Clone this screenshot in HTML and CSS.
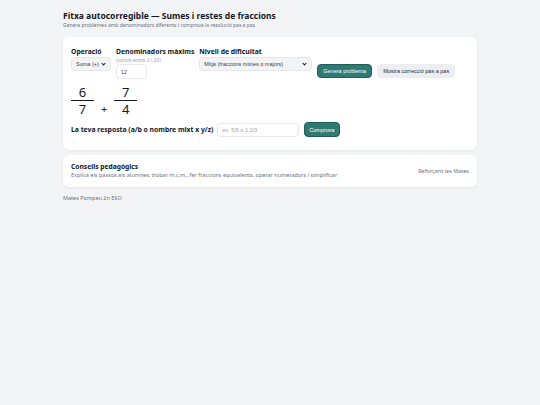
FILE: index.html
```html
<!DOCTYPE html>
<html lang="ca">
<head>
  <meta charset="UTF-8" />
  <title>Fitxa autocorregible</title>
  <link rel="stylesheet" href="styles.css">
</head>
<body>
  <div class="wrap">
    <header class="head">
      <h1>Fitxa autocorregible — Sumes i restes de fraccions</h1>
      <p class="sub">Genera problemes amb denominadors diferents i comprova la resolució pas a pas</p>
    </header>

    <section class="card main">
      <div class="controls">
        <div class="field">
          <label for="op">Operació</label>
          <span class="sel">
            <select id="op">
              <option>Suma (+)</option>
              <option>Resta (−)</option>
            </select>
          </span>
        </div>
        <div class="field">
          <label for="den">Denominadors màxims</label>
          <span class="hint">(valors entre 2 i 20)</span>
          <input type="number" id="den" value="12" min="2" max="20" />
        </div>
        <div class="field">
          <label for="lvl">Nivell de dificultat</label>
          <span class="sel">
            <select id="lvl" class="wide">
              <option>Mitjà (fraccions mixtes o majors)</option>
            </select>
          </span>
        </div>
        <button class="btn primary">Genera problema</button>
        <button class="btn light">Mostra correcció pas a pas</button>
      </div>

      <div class="problem">
        <div class="frac"><span class="num">6</span><span class="den">7</span></div>
        <span class="sign">+</span>
        <div class="frac"><span class="num">7</span><span class="den">4</span></div>
      </div>

      <div class="answer">
        <label for="ans">La teva resposta (a/b o nombre mixt x y/z)</label>
        <input type="text" id="ans" placeholder="ex. 5/6 o 1 2/3" />
        <button class="btn primary">Comprova</button>
      </div>
    </section>

    <section class="card tips">
      <div>
        <h2>Consells pedagògics</h2>
        <p>Explica els passos als alumnes: trobar m.c.m., fer fraccions equivalents, operar numeradors i simplificar</p>
      </div>
      <span class="brand">Reforçant les Mates</span>
    </section>

    <footer class="foot">Mates Pompeu 2n ESO</footer>
  </div>
</body>
</html>
```

FILE: styles.css
```css
body {
  margin: 0;
  background: #f3f4f6;
  color: #1f2937;
  font-family: "Noto Sans", "Open Sans", sans-serif;
}
.wrap {
  width: 414px;
  margin: 0 auto;
  padding-top: 10px;
}
h1 {
  margin: 0;
  font-size: 8.5px;
  line-height: 12px;
  font-weight: 700;
  color: #111827;
}
.sub {
  margin: 0;
  font-size: 5px;
  line-height: 7px;
  color: #6b7280;
}
.card {
  background: #fff;
  border-radius: 6px;
  box-shadow: 0 1px 3px rgba(0,0,0,0.06);
}
.main {
  margin-top: 8px;
  padding: 10px 8px 13px;
}
.controls {
  display: flex;
  align-items: flex-end;
  gap: 5px;
}
.field {
  display: flex;
  flex-direction: column;
  align-items: flex-start;
}
.field label {
  font-size: 6.8px;
  line-height: 9px;
  font-weight: 700;
  color: #111827;
  margin-bottom: 1px;
}
.hint {
  font-size: 5px;
  line-height: 6px;
  color: #9ca3af;
  margin-bottom: 1px;
}
select,
input {
  font-family: "Liberation Sans", Arial, sans-serif;
  font-size: 5.5px;
  color: #374151;
}
/* flecha pròpia del desplegable */
.sel {
  position: relative;
  display: block;
  margin-bottom: 8px;
}
.sel::after {
  content: "";
  position: absolute;
  right: 6px;
  top: 5px;
  width: 2px;
  height: 2px;
  border-right: 1px solid #111827;
  border-bottom: 1px solid #111827;
  transform: rotate(45deg);
  pointer-events: none;
}
select {
  appearance: none;
  display: block;
  background: #f3f4f6;
  border: 1px solid #e5e7eb;
  border-radius: 4px;
  height: 14px;
  padding: 0 4px;
  width: 40px;
}
select.wide {
  width: 113px;
}
input {
  border: 1px solid #e5e7eb;
  border-radius: 4px;
  height: 15px;
  box-sizing: border-box;
  padding: 0 4px;
  background: #fff;
}
#den {
  width: 31px;
}
.btn {
  font-family: "Liberation Sans", Arial, sans-serif;
  font-size: 5.5px;
  height: 14px;
  padding: 0 5px;
  border-radius: 4px;
  cursor: pointer;
}
.controls .btn {
  margin-bottom: 1px;
}
.primary {
  background: #2f7a72;
  color: #fff;
  border: 1px solid #1f5f58;
}
.light {
  background: #eceef1;
  color: #1f2937;
  border: 1px solid #eceef1;
}
.problem {
  display: flex;
  align-items: flex-end;
  gap: 7px;
  margin-top: 6px;
}
.frac {
  display: flex;
  flex-direction: column;
  width: 23px;
  font-size: 13px;
  line-height: 14px;
  text-align: center;
  color: #111827;
}
.frac .num {
  padding-bottom: 1px;
  border-bottom: 1px solid #111827;
}
.frac .den {
  padding-top: 1px;
}
.sign {
  font-size: 11px;
  line-height: 14px;
}
.answer {
  display: flex;
  align-items: center;
  gap: 4px;
  margin-top: 6px;
}
.answer label {
  font-size: 6.8px;
  font-weight: 700;
  color: #111827;
}
#ans {
  width: 82px;
  height: 14px;
}
.answer .btn {
  height: 15px;
  padding: 0 4px;
  margin-left: 1px;
}
input::placeholder {
  color: #9ca3af;
}
.tips {
  margin-top: 5px;
  display: flex;
  justify-content: space-between;
  align-items: center;
  padding: 7px 8px 8px;
}
.tips h2 {
  margin: 0;
  font-size: 6.7px;
  line-height: 9px;
  font-weight: 700;
  color: #111827;
}
.tips p {
  margin: 0;
  font-size: 5.5px;
  line-height: 8px;
  color: #6b7280;
}
.brand {
  font-size: 5.5px;
  color: #6b7280;
}
.foot {
  margin-top: 7px;
  font-size: 5.5px;
  line-height: 8px;
  color: #6b7280;
}
```
